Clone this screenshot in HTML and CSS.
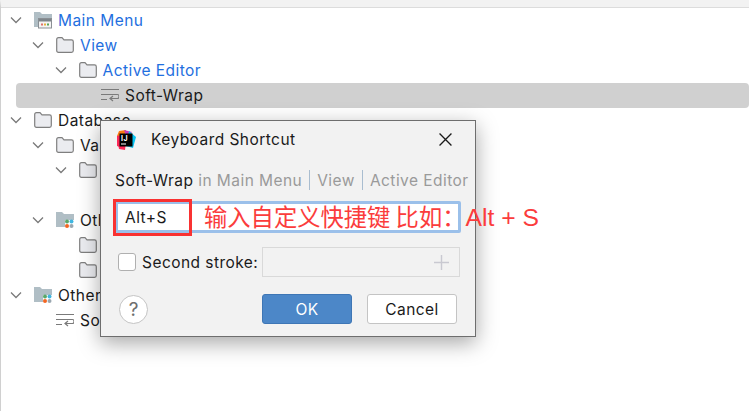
FILE: index.html
```html
<!DOCTYPE html>
<html>
<head>
    <title>Keyboard Shortcut</title>
    <link rel="stylesheet" href="styles.css">
</head>
<body>
    <svg class="defs" width="0" height="0">
        <symbol id="chevron" viewBox="0 0 16 16">
            <path d="M3 5.5l5 5 5-5" fill="none" stroke="#7a7a7a" stroke-width="1.3"/>
        </symbol>
        <symbol id="folder" viewBox="0 0 18 16">
            <path d="M.7 2.5Q.7.7 2.5.7H6L8 2.9H15.5Q17.3 2.9 17.3 4.7V13.5Q17.3 15.3 15.5 15.3H2.5Q.7 15.3.7 13.5Z" fill="#ebecf0" stroke="#7f7f7f" stroke-width="1.2"/>
        </symbol>
        <symbol id="wrap" viewBox="0 0 18 16">
            <path d="M0 2.5H18M0 7.5H16.5Q18 7.5 18 9.5T16.5 11.5H9M0 12.5H6" fill="none" stroke="#7a7a7a" stroke-width="1.2"/>
            <path d="M12 9L9 11.5L12 14" fill="none" stroke="#7a7a7a" stroke-width="1.2"/>
        </symbol>
        <symbol id="menuFolder" viewBox="0 0 18 18">
            <path d="M0 1H6L8 3H18V7H6V16H0Z" fill="#b0bec5"/>
            <rect x="4.5" y="7.5" width="13" height="9.5" fill="#f4f4f4" stroke="#8a8f94"/>
            <rect x="5" y="8" width="12" height="2.5" fill="#7e858a"/>
            <rect x="7" y="12.5" width="2" height="2" fill="#e0726a"/>
            <rect x="10" y="12.5" width="2" height="2" fill="#e8b23c"/>
            <rect x="13" y="12.5" width="2" height="2" fill="#58a55c"/>
        </symbol>
        <symbol id="pluginFolder" viewBox="0 0 18 18">
            <path d="M0 1H6L8 3H18V9H9V16H0Z" fill="#b0bec5"/>
            <circle cx="11" cy="10.5" r="2" fill="#59a869"/>
            <circle cx="15.5" cy="10.5" r="2" fill="#40b6e0"/>
            <circle cx="11" cy="15" r="2" fill="#f26522"/>
            <circle cx="15.5" cy="15" r="2" fill="#9aa7b0"/>
        </symbol>
    </svg>

    <div class="tree">
        <div class="row level0 link"><svg class="chev"><use href="#chevron"/></svg><svg class="icon"><use href="#menuFolder"/></svg>Main Menu</div>
        <div class="row level1 link"><svg class="chev"><use href="#chevron"/></svg><svg class="icon"><use href="#folder"/></svg>View</div>
        <div class="row level2 link"><svg class="chev"><use href="#chevron"/></svg><svg class="icon"><use href="#folder"/></svg>Active Editor</div>
        <div class="row level3 selected"><span class="chev"></span><svg class="icon"><use href="#wrap"/></svg>Soft-Wrap</div>
        <div class="row level0"><svg class="chev"><use href="#chevron"/></svg><svg class="icon"><use href="#folder"/></svg>Database</div>
        <div class="row level1"><svg class="chev"><use href="#chevron"/></svg><svg class="icon"><use href="#folder"/></svg>Va</div>
        <div class="row level2"><svg class="chev"><use href="#chevron"/></svg><svg class="icon"><use href="#folder"/></svg></div>
        <div class="row level3"></div>
        <div class="row level1"><svg class="chev"><use href="#chevron"/></svg><svg class="icon"><use href="#pluginFolder"/></svg>Oth</div>
        <div class="row level2"><span class="chev"></span><svg class="icon"><use href="#folder"/></svg></div>
        <div class="row level2"><span class="chev"></span><svg class="icon"><use href="#folder"/></svg></div>
        <div class="row level0"><svg class="chev"><use href="#chevron"/></svg><svg class="icon"><use href="#pluginFolder"/></svg>Other</div>
        <div class="row level1"><span class="chev"></span><svg class="icon"><use href="#wrap"/></svg>So</div>
    </div>

    <div class="dialog">
        <div class="titleBar">
            <svg class="logo" viewBox="0 0 20 20">
                <path d="M3 1L10 0L8 8L1 6Z" fill="#f97a12"/>
                <path d="M1 6L7 5L6 18L1 16Z" fill="#fe2857"/>
                <path d="M8 0L16 2L11 8Z" fill="#c93bb8"/>
                <path d="M13 1L20 7L17 18L10 16Z" fill="#07c3f2"/>
                <path d="M2 14L10 12L9 20L3 19Z" fill="#fe2857"/>
                <rect x="3.5" y="3.5" width="13" height="13" fill="#000"/>
                <rect x="5" y="13.5" width="5" height="1" fill="#fff"/>
                <text x="5" y="10.5" class="logoText">IJ</text>
            </svg>
            <span class="title">Keyboard Shortcut</span>
            <svg class="close" viewBox="0 0 12 12"><path d="M.5.5L11.5 11.5M11.5.5L.5 11.5" stroke="#1a1a1a" stroke-width="1.2"/></svg>
        </div>

        <div class="crumbs">Soft-Wrap <span class="muted">in Main Menu</span><i class="sep"></i><span class="muted">View</span><i class="sep"></i><span class="muted">Active Editor</span></div>

        <div class="shortcut">Alt+S</div>

        <div class="strokeRow">
            <span class="check"></span>
            <span class="strokeLabel">Second stroke:</span>
            <div class="strokeField">
                <svg class="plus" viewBox="0 0 15 15"><path d="M7.5 0V15M0 7.5H15" stroke="#c9c9d1" stroke-width="1.4"/></svg>
            </div>
        </div>

        <div class="buttons">
            <span class="help">?</span>
            <button class="btn ok">OK</button>
            <button class="btn cancel">Cancel</button>
        </div>

        <!-- red markup drawn on top of the screenshot -->
        <div class="redBox"></div>
        <div class="note">输入自定义快捷键 比如：<span class="noteKeys">Alt + S</span></div>
    </div>
</body>
</html>
```

FILE: styles.css
```css
* {
    box-sizing: border-box;
}

html, body {
    height: 100%;
}

body {
    margin: 0;
    overflow: hidden;
    position: relative;
    background: #fff;
    font-family: Inter, "Noto Sans CJK SC", sans-serif;
    font-size: 15.5px;
    letter-spacing: 0.45px;
    color: #1a1a1a;
}

.defs {
    position: absolute;
}

.tree {
    height: 100%;
    padding-top: 0.5px;
    border-top: 7px solid #f2f2f2;
    border-left: 1px solid #d0d0d0;
    box-shadow: inset 0 1px 0 #dcdcdc;
}

.row {
    display: flex;
    align-items: center;
    height: 25px;
    white-space: nowrap;
}

.level0 { padding-left: 7px; }
.level1 { padding-left: 29px; }
.level2 { padding-left: 51.5px; }
.level3 { padding-left: 74px; }

.link {
    color: #1f6fe0;
}

.selected {
    margin-left: 15px;
    padding-left: 59px;
    background: #d0d0d0;
    border-radius: 4px;
}

.chev {
    width: 16px;
    height: 16px;
    margin-right: 10px;
    flex: none;
}

.icon {
    width: 18px;
    height: 18px;
    margin-right: 6px;
    flex: none;
}

.dialog {
    position: absolute;
    left: 100px;
    top: 120px;
    width: 376px;
    height: 217px;
    padding: 0 15px;
    background: #f2f2f2;
    border: 1px solid #6e6e6e;
    box-shadow: 0 6px 20px rgba(0, 0, 0, 0.35);
}

.titleBar {
    display: flex;
    align-items: center;
    height: 37px;
}

.logo {
    width: 20px;
    height: 20px;
    margin-right: 15px;
}

.logoText {
    font-size: 7px;
    font-weight: 700;
    fill: #fff;
}

.title {
    flex: 1;
}

.close {
    width: 13px;
    height: 13px;
    margin-right: 8px;
}

.crumbs {
    display: flex;
    align-items: center;
    height: 20px;
    margin: 12px 0 0 -1px;
    white-space: pre;
}

.muted {
    color: #9a9a9a;
}

.sep {
    flex: none;
    width: 1px;
    height: 20px;
    margin: 0 7px;
    background: #a9bdd0;
}

.shortcut {
    display: flex;
    align-items: center;
    width: 346px;
    height: 32px;
    margin: 11px 0 0 -1px;
    padding-left: 7px;
    background: #fff;
    border: 3px solid #9bc0ea;
    border-radius: 2px;
}

.strokeRow {
    display: flex;
    align-items: center;
    height: 30px;
    margin-top: 14px;
}

.check {
    flex: none;
    width: 18px;
    height: 18px;
    margin: 0 6px 0 2px;
    background: #fff;
    border: 1px solid #b0b0b0;
    border-radius: 3px;
}

.strokeLabel {
    width: 120px;
    white-space: nowrap;
    flex: none;
}

.strokeField {
    flex: none;
    display: flex;
    align-items: center;
    justify-content: flex-end;
    width: 198px;
    height: 30px;
    padding-right: 10px;
    border: 1px solid #d9d9d9;
}

.plus {
    width: 15px;
    height: 15px;
}

.buttons {
    display: flex;
    align-items: center;
    height: 30px;
    margin-top: 17px;
    padding-left: 3px;
}

.help {
    width: 29px;
    height: 29px;
    margin-right: 114px;
    background: #fff;
    border: 1px solid #c4c4c4;
    border-radius: 50%;
    text-align: center;
    line-height: 27px;
    font-size: 19px;
    letter-spacing: 0;
    color: #6e6e6e;
}

.btn {
    width: 90px;
    height: 30px;
    border-radius: 3px;
    font: inherit;
    letter-spacing: inherit;
}

.ok {
    margin-right: 15px;
    background: #4c87c8;
    border: 1px solid #3e76b5;
    color: #fff;
}

.cancel {
    background: #fff;
    border: 1px solid #c4c4c4;
    color: #1a1a1a;
}

.redBox {
    position: absolute;
    left: 12px;
    top: 78px;
    width: 79px;
    height: 37px;
    border: 3px solid #f93232;
}

.note {
    position: absolute;
    left: 103px;
    top: 79px;
    white-space: nowrap;
    font-family: "Noto Sans CJK SC", sans-serif;
    font-size: 23.3px;
    line-height: 32px;
    letter-spacing: 0;
    color: #fb3c3c;
}

.noteKeys {
    font-family: "Liberation Sans", sans-serif;
    font-size: 24.7px;
}
```
